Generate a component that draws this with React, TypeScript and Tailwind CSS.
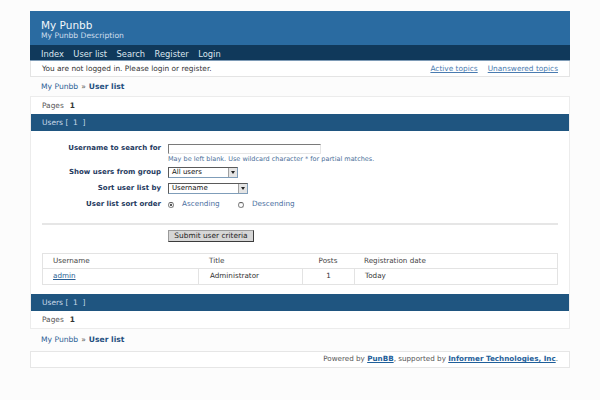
import React from 'react';

const font = { fontFamily: '"DejaVu Sans", Verdana, sans-serif' };

const Select: React.FC<{ value: string; width: string }> = ({ value, width }) => (
    <div className={`${width} h-[11px] flex items-center bg-white border border-[#7f9db9] border-t-[#5a5a5a] border-l-[#5a5a5a]`}>
        <span className="flex-1 pl-[3px] text-[7px] leading-[9px] text-[#111]">{value}</span>
        <span className="w-[9px] h-[9px] bg-[#e4e4e4] border-l border-[#a0a0a0] flex items-center justify-center">
            <span className="w-0 h-0 border-l-[2.5px] border-r-[2.5px] border-t-[3px] border-l-transparent border-r-transparent border-t-[#222]" />
        </span>
    </div>
);

const Radio: React.FC<{ checked?: boolean }> = ({ checked }) => (
    <span className="w-[6px] h-[6px] rounded-full border border-[#8a8a8a] border-t-[#555] bg-white flex items-center justify-center">
        {checked && <span className="w-[2px] h-[2px] rounded-full bg-[#222]" />}
    </span>
);

const Band: React.FC = () => (
    <div className="h-[17px] bg-[#1f5580] px-[11px] flex items-center text-[7.5px] text-[#c9d9e8]">
        Users&nbsp;[&nbsp;&nbsp;1&nbsp;&nbsp;]
    </div>
);

const Pages: React.FC = () => (
    <div className="h-[17px] px-[11px] flex items-center gap-[6px] text-[7.4px] text-[#555]">
        <span>Pages</span>
        <span className="font-bold text-[#333]">1</span>
    </div>
);

const Crumbs: React.FC<{ h: string }> = ({ h }) => (
    <div className={`${h} px-[11px] flex items-center text-[7.6px] text-[#2b5f94]`}>
        <span>My Punbb</span>
        <span className="mx-[3px] text-[#555]">»</span>
        <span className="font-bold text-[#1f4f80]">User list</span>
    </div>
);

const Label: React.FC<{ children: React.ReactNode }> = ({ children }) => (
    <span className="w-[119px] text-right text-[7px] font-bold text-[#1f3a60]">{children}</span>
);

export default function App() {
    return (
        <div className="min-h-[400px] bg-[#fcfcfc] pt-[11px]" style={font}>
            <div className="ml-[30px] w-[540px]">
                <div className="h-[34px] bg-[#2a6ba1] px-[11px] pt-[9px] flex flex-col">
                    <span className="text-[10.5px] leading-[11px] text-[#f2f6fa]">My Punbb</span>
                    <span className="text-[7.6px] leading-[9px] text-[#cfdeed]">My Punbb Description</span>
                </div>
                <div className="h-[16px] bg-[#10395b] border-b border-[#7e9bb6] px-[11px] pt-[3px] flex items-center gap-[9.5px] text-[8.3px] text-[#dbe5ee]">
                    <span>Index</span>
                    <span>User list</span>
                    <span>Search</span>
                    <span>Register</span>
                    <span>Login</span>
                </div>
                <div className="h-[16px] bg-white border-x border-b border-[#e4e4e4] px-[11px] pt-[1px] flex items-center justify-between text-[7.4px] text-[#333]">
                    <span>You are not logged in. Please login or register.</span>
                    <span className="flex gap-[10px] text-[#4a7bb0] underline">
                        <span>Active topics</span>
                        <span>Unanswered topics</span>
                    </span>
                </div>

                <Crumbs h="h-[19px]" />

                <div className="bg-white border-x border-y border-[#ececec]">
                    <Pages />
                    <Band />
                    <div className="px-[11px] pt-[12px] pb-[9px] flex flex-col">
                        <div className="h-[11px] flex items-center gap-[7px]">
                            <Label>Username to search for</Label>
                            <span className="w-[153px] h-[10px] bg-white border-t border-l border-[#7a7a7a] border-b border-r border-b-[#e6e6e6] border-r-[#e6e6e6]" />
                        </div>
                        <div className="mt-[1px] h-[9px] pl-[126px] flex items-center text-[6.5px] text-[#4a6f99]">
                            May be left blank. Use wildcard character * for partial matches.
                        </div>
                        <div className="mt-[3px] h-[11px] flex items-center gap-[7px]">
                            <Label>Show users from group</Label>
                            <Select value="All users" width="w-[70px]" />
                        </div>
                        <div className="mt-[5px] h-[11px] flex items-center gap-[7px]">
                            <Label>Sort user list by</Label>
                            <Select value="Username" width="w-[80px]" />
                        </div>
                        <div className="mt-[5px] h-[11px] flex items-center gap-[7px] text-[7.25px] text-[#4a6fa0]">
                            <Label>User list sort order</Label>
                            <Radio checked />
                            <span className="ml-[1px] w-[49px]">Ascending</span>
                            <Radio />
                            <span className="ml-[1px]">Descending</span>
                        </div>
                        <div className="mt-[13px] h-[2px] bg-[#e6e6e6]" />
                        <div className="mt-[5px] h-[12px] pl-[126px] flex">
                            <span className="w-[86px] h-[12px] bg-[#d6d6d6] border border-[#3c3c3c] border-t-[#9a9a9a] border-l-[#9a9a9a] flex items-center justify-center text-[7.4px] text-[#222]">
                                Submit user criteria
                            </span>
                        </div>
                        <div className="mt-[11px] border border-[#e3e3e3] text-[7.2px] text-[#333]">
                            <div className="h-[15px] grid grid-cols-[155px_104px_52px_1fr] items-center border-b border-[#e3e3e3] text-[#444]">
                                <span className="pl-[10px]">Username</span>
                                <span className="pl-[11px]">Title</span>
                                <span className="text-center">Posts</span>
                                <span className="pl-[10px]">Registration date</span>
                            </div>
                            <div className="h-[15px] grid grid-cols-[155px_104px_52px_1fr]">
                                <span className="pl-[10px] flex items-center text-[#2b5f94] underline">admin</span>
                                <span className="pl-[11px] flex items-center border-l border-[#e3e3e3]">Administrator</span>
                                <span className="flex items-center justify-center border-l border-[#e3e3e3]">1</span>
                                <span className="pl-[10px] flex items-center border-l border-[#e3e3e3]">Today</span>
                            </div>
                        </div>
                    </div>
                    <Band />
                    <Pages />
                </div>

                <Crumbs h="h-[22px]" />

                <div className="h-[17px] bg-white border border-[#e6e6e6] px-[11px] flex items-center justify-end text-[7.2px] text-[#555]">
                    <span>Powered by&nbsp;</span>
                    <span className="font-bold text-[#1f5f9a] underline">PunBB</span>
                    <span>, supported by&nbsp;</span>
                    <span className="font-bold text-[#1f5f9a] underline">Informer Technologies, Inc</span>
                    <span>.</span>
                </div>
            </div>
        </div>
    );
}
